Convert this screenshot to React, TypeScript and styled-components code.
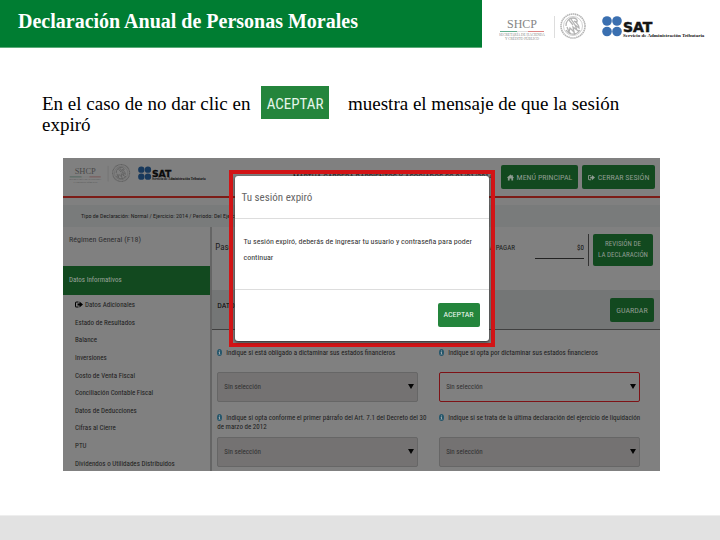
import React from "react";
import styled, { createGlobalStyle, css } from "styled-components";

const serif = `"Liberation Serif", "Times New Roman", serif`;
const narrow = `"Roboto Condensed", "Liberation Sans Narrow", Roboto, sans-serif`;

const GlobalStyle = createGlobalStyle`
  *, *::before, *::after { box-sizing: border-box; }
  body { margin: 0; background: #fff; }
  button, select, input { font: inherit; margin: 0; }
  h1, h2, h3, p, ul { margin: 0; padding: 0; font-weight: normal; }
`;

const Slide = styled.main`
  min-height: 100vh;
  display: flex;
  flex-direction: column;
  font-family: ${serif};
  color: #000;
`;

const TopBar = styled.header`
  display: flex;
  height: 48px;
`;

const Title = styled.h1`
  flex: 0 0 67%;
  padding: 10px 18px;
  background: #007d32;
  border-bottom: 1px solid #5cab79;
  color: #fff;
  font-size: 20px;
  line-height: 22px;
  font-weight: bold;
  white-space: nowrap;
`;

const Brands = styled.div<{ $small?: boolean }>`
  display: flex;
  align-items: center;
  ${(p) =>
    p.$small
      ? css`
          gap: 7px;
          svg:first-child { width: 62px; height: 30px; }
          svg:last-child { width: 69px; height: 30px; }
        `
      : css`
          flex: 1;
          justify-content: space-between;
          padding: 4px 14px 0 17px;
          svg:first-child { width: 88px; height: 38px; }
          svg:last-child { width: 104px; height: 30px; }
        `}
`;

const Statement = styled.section`
  display: flex;
  align-items: flex-start;
  padding: 38px 20px 0 42px;
  min-height: 110px;
  font-size: 19px;
  line-height: 21px;
`;

const Phrase = styled.p<{ $wide?: boolean }>`
  flex: 0 0 ${(p) => (p.$wide ? "auto" : "219px")};
  padding-top: 7px;
  white-space: nowrap;
`;

const SampleButton = styled.button`
  width: 68px;
  height: 33px;
  margin-right: 19px;
  padding: 3px 0 0;
  border: 0;
  background: #24853c;
  color: #e6f5ea;
  font-family: ${narrow};
  font-size: 15px;
`;

const Capture = styled.section`
  position: relative;
  margin: 0 60px 0 63px;
  background: #808080;
  color: #1c1c1c;
  font-family: ${narrow};
  font-size: 7px;
  line-height: 10px;
`;

const AppHeader = styled.header`
  display: flex;
  justify-content: space-between;
  align-items: flex-start;
  height: 40px;
  padding: 0 5px 0 6px;
  border-bottom: 2px solid #7c1c17;
`;

const UserLine = styled.p`
  flex: 1;
  padding: 14px 8px 0 0;
  text-align: right;
  white-space: nowrap;
  font-size: 8px;
`;

const Actions = styled.div`
  display: flex;
  gap: 4px;
  padding-top: 7px;
`;

const DarkButton = styled.button<{ $kind?: "top" | "review" | "save" }>`
  display: flex;
  align-items: center;
  justify-content: center;
  gap: 3px;
  border: 0;
  border-radius: 2px;
  padding: 0;
  background: #12491f;
  color: #8f9b91;
  font-size: 8px;
  line-height: 11px;
  width: ${(p) => (p.$kind === "top" ? "77px" : p.$kind === "review" ? "60px" : "44px")};
  height: ${(p) => (p.$kind === "review" ? "32px" : "24px")};
  ${(p) => p.$kind === "top" && css`&:last-child { width: 73px; }`}
  ${(p) => p.$kind === "review" && css`font-size: 7px;`}
  svg { width: 7px; height: 7px; fill: currentColor; }
`;

const Crumbs = styled.nav`
  height: 22px;
  margin-top: 7px;
  padding: 6px 18px;
  background: #797b7b;
  font-size: 6px;
`;

const Columns = styled.div`
  display: flex;
`;

const Sidebar = styled.aside`
  flex: 0 0 25%;
  display: flex;
  flex-direction: column;
  border-right: 2px solid #656565;
`;

const Regime = styled.h2`
  height: 39px;
  padding: 8px 6px;
  font-size: 8px;
  color: #303033;
`;

const ActiveSection = styled.a`
  display: block;
  height: 29px;
  padding: 9px 6px;
  background: #12491f;
  color: #9aa39b;
  text-decoration: none;
`;

const Sections = styled.ul`
  flex: 1;
  display: flex;
  flex-direction: column;
  list-style: none;
`;

const Section = styled.li`
  flex: 1;
  display: flex;
  align-items: center;
  padding: 3px 0 0 12px;
  a {
    display: flex;
    gap: 2px;
    color: inherit;
    text-decoration: none;
  }
  svg { width: 8px; height: 9px; }
`;

const Content = styled.div`
  flex: 1;
`;

const Summary = styled.div`
  display: flex;
  align-items: flex-start;
  height: 63px;
  padding: 7px 7px 0 3px;
`;

const Step = styled.p`
  flex: 1;
  padding-top: 8px;
  font-size: 9px;
`;

const Payable = styled.label`
  display: flex;
  gap: 20px;
  height: 32px;
  margin-right: 4px;
  padding: 9px 4px 0 0;
  border-right: 1px solid #333;
`;

const Amount = styled.input`
  width: 49px;
  height: 16px;
  padding: 0 0 5px;
  border: 0;
  border-bottom: 1px solid #222;
  background: none;
  color: #111;
  text-align: right;
`;

const Band = styled.div`
  display: flex;
  justify-content: space-between;
  height: 40px;
  padding: 8px 6px 0 5px;
  background: #747676;
  border-bottom: 1px solid #404040;
`;

const BandTitle = styled.h2`
  padding-top: 3px;
  font-size: 8px;
  color: #080808;
`;

const Form = styled.form`
  display: grid;
  grid-template-columns: 1fr 1fr;
  gap: 12px 21px;
  padding: 19px 20px 4px 5px;
`;

const Field = styled.div`
  position: relative;
  label {
    display: block;
    height: 23px;
    margin-right: -12px;
    line-height: 9px;
  }
  label svg { width: 5px; height: 7px; margin-right: 4px; vertical-align: -1px; }
`;

const Picker = styled.select<{ $required?: boolean }>`
  display: block;
  width: 100%;
  height: 30px;
  padding: 0 6px;
  appearance: none;
  border: 1px solid ${(p) => (p.$required ? "#7e1216" : "#666")};
  border-radius: 2px;
  background: ${(p) => (p.$required ? "#808080" : "#747272")};
  color: #303030;
`;

const Caret = styled.svg`
  position: absolute;
  right: 4px;
  bottom: 13px;
  width: 6px;
  height: 5px;
  pointer-events: none;
`;

const Highlight = styled.div`
  position: absolute;
  top: 12px;
  left: 50%;
  width: 266px;
  transform: translateX(-50%);
  padding: 2px;
  border: 4px solid #d21416;
`;

const Dialog = styled.div`
  display: flex;
  flex-direction: column;
  border-radius: 3px;
  background: #fff;
  box-shadow: 0 1px 3px #222;
  color: #333;
`;

const DialogTitle = styled.h2`
  height: 43px;
  padding: 14px 7px 0;
  border-bottom: 1px solid #ddd;
  color: #666;
  font-size: 11px;
  line-height: 16px;
`;

const DialogText = styled.p`
  height: 71px;
  padding: 15px 9px 0;
  border-bottom: 1px solid #ddd;
  font-size: 8px;
  line-height: 16px;
`;

const DialogActions = styled.div`
  display: flex;
  justify-content: flex-end;
  padding: 13px 9px 14px;
`;

const AcceptButton = styled.button`
  width: 42px;
  height: 24px;
  padding: 0;
  border: 0;
  border-radius: 2px;
  background: #24853c;
  color: #f0faf2;
  font-size: 8px;
`;

const Footer = styled.footer`
  height: 25px;
  margin-top: auto;
  border-top: 1px solid #eee;
  background: #e2e2e2;
`;

function ShcpLogo({ dim }: { dim?: boolean }) {
  const ink = dim ? "#484848" : "#858585";
  const seal = dim ? "#626262" : "#b4b4b4";
  return (
    <svg viewBox="0 0 88 38" role="img" aria-label="SHCP">
      <text x="23" y="21" fontFamily="Liberation Serif" fontSize="12" textAnchor="middle" fill={ink}>SHCP</text>
      <path d="M1 24.5h17" stroke={dim ? "#3f5c50" : "#62ad8e"} />
      <path d="M18 24.5h11" stroke={dim ? "#777" : "#ddd"} />
      <path d="M29 24.5h16" stroke={dim ? "#734545" : "#de8585"} />
      <text x="23" y="29" fontFamily="Liberation Serif" fontSize="3.500" textAnchor="middle" fill={ink}>SECRETARÍA DE HACIENDA</text>
      <text x="23" y="33" fontFamily="Liberation Serif" fontSize="3.500" textAnchor="middle" fill={ink}>Y CRÉDITO PÚBLICO</text>
      <path d="M55.500 9v22" stroke={dim ? "#6d6d6d" : "#ddd"} />
      <g fill="none" stroke={seal}>
        <circle cx="74" cy="19" r="12" strokeWidth="1.600" strokeDasharray="1.500 .5" />
        <circle cx="74" cy="19" r="9.500" strokeWidth=".6" />
        <path d="M67 19c0-5 3-8 7-8 3 0 5 2 4 4l-3-1c3 2 5 4 5 7l-4-3 2 5-4-3 1 5-4-4-1 4-2-5M70 13l4 5M72 12l4 6M67 23c3 5 10 6 14 0M70 25l2 2m3-2 1 3m3-5 1 2" strokeWidth="1.300" />
      </g>
    </svg>
  );
}

function SatLogo({ dim }: { dim?: boolean }) {
  const blue = dim ? "#18395c" : "#3a6fb0";
  const ink = dim ? "#0b0b0b" : "#151515";
  return (
    <svg viewBox="0 0 104 30" role="img" aria-label="SAT Servicio de Administración Tributaria">
      <g fill={blue}>
        <circle cx="5" cy="10" r="4.800" />
        <circle cx="15" cy="10" r="4.800" />
        <circle cx="5" cy="20.500" r="4.800" />
        <circle cx="15" cy="20.500" r="4.800" />
      </g>
      <text x="21" y="20.500" fontFamily="DejaVu Sans" fontWeight="bold" fontSize="14" stroke={ink} strokeWidth=".5" fill={ink}>SAT</text>
      <text x="21" y="25.500" fontFamily="Liberation Serif" fontWeight="bold" fontSize="5" fill={ink}>Servicio de Administración Tributaria</text>
    </svg>
  );
}

const HomeIcon = () => (
  <svg viewBox="0 0 16 16" aria-hidden="true"><path d="M8 1 0 8l1 1 1-1v7h4v-5h4v5h4V8l1 1 1-1-3-3V2h-2v2z" /></svg>
);

const ExitIcon = () => (
  <svg viewBox="0 0 16 16" aria-hidden="true"><path d="M7 2H3Q0 2 0 5v6q0 3 3 3h4v-2H3q-1 0-1-1V5q0-1 1-1h4zM9 2l7 6-7 6v-4H5V6h4z" /></svg>
);

const InfoIcon = () => (
  <svg viewBox="0 0 10 14" aria-hidden="true">
    <ellipse cx="5" cy="7" rx="5" ry="7" fill="#24566b" />
    <path d="M4 3h2v2H4zM3 6h3v4h1v1H3v-1h1V7H3z" fill="#9aa5aa" />
  </svg>
);

const sections = [
  "Datos Adicionales",
  "Estado de Resultados",
  "Balance",
  "Inversiones",
  "Costo de Venta Fiscal",
  "Conciliación Contable Fiscal",
  "Datos de Deducciones",
  "Cifras al Cierre",
  "PTU",
  "Dividendos o Utilidades Distribuidos",
];

const fields = [
  { id: "obligado", label: "Indique si está obligado a dictaminar sus estados financieros" },
  { id: "opta", label: "Indique si opta por dictaminar sus estados financieros", required: true },
  { id: "decreto", label: "Indique si opta conforme el primer párrafo del Art. 7.1 del Decreto del 30 de marzo de 2012" },
  { id: "liquidacion", label: "Indique si se trata de la última declaración del ejercicio de liquidación" },
];

export default function App() {
  return (
    <Slide>
      <GlobalStyle />
      <TopBar>
        <Title>Declaración Anual de Personas Morales</Title>
        <Brands>
          <ShcpLogo />
          <SatLogo />
        </Brands>
      </TopBar>

      <Statement>
        <Phrase>
          En el caso de no dar clic en
          <br />
          expiró
        </Phrase>
        <SampleButton type="button">ACEPTAR</SampleButton>
        <Phrase $wide>muestra el mensaje de que la sesión</Phrase>
      </Statement>

      <Capture>
        <AppHeader>
          <Brands $small>
            <ShcpLogo dim />
            <SatLogo dim />
          </Brands>
          <UserLine>MARTHA CABRERA BARRIENTOS Y ASOCIADOS SC 01/01/2014</UserLine>
          <Actions>
            <DarkButton type="button" $kind="top"><HomeIcon />MENÚ PRINCIPAL</DarkButton>
            <DarkButton type="button" $kind="top"><ExitIcon />CERRAR SESIÓN</DarkButton>
          </Actions>
        </AppHeader>
        <Crumbs>Tipo de Declaración: Normal / Ejercicio: 2014 / Periodo: Del Ejercicio</Crumbs>
        <Columns>
          <Sidebar>
            <Regime>Régimen General (F18)</Regime>
            <ActiveSection href="#datos">Datos Informativos</ActiveSection>
            <Sections>
              {sections.map((name, i) => (
                <Section key={name}>
                  <a href={`#seccion-${i}`}>
                    {i === 0 && <ExitIcon />}
                    {name}
                  </a>
                </Section>
              ))}
            </Sections>
          </Sidebar>
          <Content>
            <Summary>
              <Step>Paso 1</Step>
              <Payable>
                A PAGAR
                <Amount defaultValue="$0" />
              </Payable>
              <DarkButton type="button" $kind="review">REVISIÓN DE<br />LA DECLARACIÓN</DarkButton>
            </Summary>
            <Band>
              <BandTitle>DATOS</BandTitle>
              <DarkButton type="button" $kind="save">GUARDAR</DarkButton>
            </Band>
            <Form>
              {fields.map((f) => (
                <Field key={f.id}>
                  <label htmlFor={f.id}><InfoIcon />{f.label}</label>
                  <Picker id={f.id} $required={f.required}>
                    <option>Sin selección</option>
                  </Picker>
                  <Caret viewBox="0 0 6 5" aria-hidden="true"><path d="M0 0h6L3 5z" fill="#050505" /></Caret>
                </Field>
              ))}
            </Form>
          </Content>
        </Columns>

        <Highlight>
          <Dialog role="dialog" aria-labelledby="dialog-title">
            <DialogTitle id="dialog-title">Tu sesión expiró</DialogTitle>
            <DialogText>Tu sesión expiró, deberás de ingresar tu usuario y contraseña para poder continuar</DialogText>
            <DialogActions>
              <AcceptButton type="button">ACEPTAR</AcceptButton>
            </DialogActions>
          </Dialog>
        </Highlight>
      </Capture>
      <Footer />
    </Slide>
  );
}
